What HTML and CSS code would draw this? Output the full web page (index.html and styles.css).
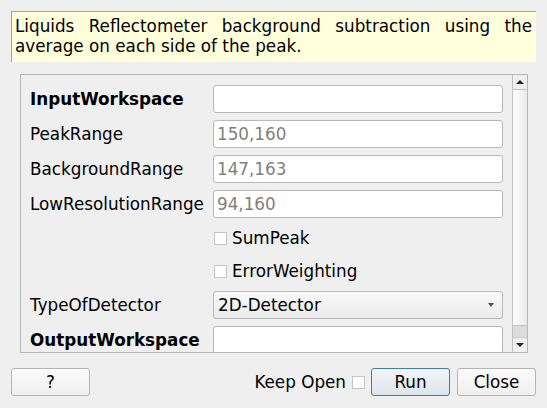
FILE: index.html
```html
<!DOCTYPE html>
<html>
<head>
<meta charset="utf-8">
<link rel="stylesheet" href="styles.css">
</head>
<body>
<div class="dialog">
  <p class="desc">Liquids Reflectometer background subtraction using the average on each side of the peak.</p>
  <div class="scroll">
    <div class="content">
      <div class="form">
        <label class="lbl bold">InputWorkspace</label>
        <div class="field"><span class="val"></span></div>

        <label class="lbl">PeakRange</label>
        <div class="field"><span class="val dim">150,160</span></div>

        <label class="lbl">BackgroundRange</label>
        <div class="field"><span class="val dim">147,163</span></div>

        <label class="lbl">LowResolutionRange</label>
        <div class="field"><span class="val dim">94,160</span></div>

        <div class="empty"></div>
        <div class="check"><span class="box"></span><span>SumPeak</span></div>

        <div class="empty"></div>
        <div class="check"><span class="box"></span><span>ErrorWeighting</span></div>

        <label class="lbl">TypeOfDetector</label>
        <div class="combo"><span>2D-Detector</span><span class="arrow"></span></div>

        <label class="lbl bold">OutputWorkspace</label>
        <div class="field"><span class="val"></span></div>
      </div>
    </div>
    <div class="sbar">
      <div class="sbtn"><span class="up"></span></div>
      <div class="handle"></div>
      <div class="track"></div>
      <div class="sbtn"><span class="down"></span></div>
    </div>
  </div>
  <div class="footer">
    <button class="btn">?</button>
    <div class="spacer"></div>
    <span class="keep">Keep Open</span>
    <span class="box keepbox"></span>
    <button class="btn run">Run</button>
    <button class="btn">Close</button>
  </div>
</div>
</body>
</html>
```

FILE: styles.css
```css
html, body {
  margin: 0;
  padding: 0;
  background: #efefef;
}
body {
  font-family: "DejaVu Sans", sans-serif;
  font-size: 16.8px;
  color: #000;
  width: 547px;
  height: 408px;
  overflow: hidden;
}
.dialog {
  box-sizing: border-box;
  height: 408px;
  padding: 11px 11px 0 11px;
  display: flex;
  flex-direction: column;
}
.desc {
  margin: 0;
  box-sizing: border-box;
  height: 51px;
  padding: 4px 4px 0 3px;
  background: #ffffdc;
  border-top: 1px solid #a0a0a0;
  border-left: 1px solid #a0a0a0;
  text-align: justify;
  line-height: 20px;
}
.scroll {
  margin: 12px 8px 0 9px;
  height: 279px;
  box-sizing: border-box;
  border: 1px solid #b6b6b6;
  display: flex;
}
.content {
  flex: 1;
  overflow: hidden;
  padding: 10px 0 0 9px;
}
.form {
  display: grid;
  grid-template-columns: 183px 290px;
  grid-auto-rows: auto;
  row-gap: 7px;
  align-items: center;
}
.lbl.bold { font-weight: bold; }
.field {
  box-sizing: border-box;
  height: 28px;
  background: #fff;
  border: 1px solid #b8b8b8;
  border-radius: 3px;
  display: flex;
  align-items: center;
  padding-left: 3px;
}
.dim { color: #7f7f7f; }
.check {
  height: 26px;
  display: flex;
  align-items: center;
  gap: 5px;
}
.box {
  display: inline-block;
  width: 13px;
  height: 13px;
  box-sizing: border-box;
  background: #fff;
  border: 1px solid #c4c4c4;
}
.check .box { margin-left: 1px; }
.combo {
  box-sizing: border-box;
  height: 28px;
  border: 1px solid #b8b8b8;
  border-radius: 3px;
  background: linear-gradient(#f9f9f9, #ececec);
  display: flex;
  align-items: center;
  justify-content: space-between;
  padding: 0 8px 0 4px;
}
.arrow {
  width: 0;
  height: 0;
  border-left: 3.5px solid transparent;
  border-right: 3.5px solid transparent;
  border-top: 4px solid #505050;
}
.sbar {
  width: 15px;
  box-sizing: border-box;
  border-left: 1px solid #c2c2c2;
  display: flex;
  flex-direction: column;
}
.sbtn {
  height: 14px;
  display: flex;
  align-items: center;
  justify-content: center;
  background: #efefef;
}
.up, .down {
  width: 0;
  height: 0;
  border-left: 4px solid transparent;
  border-right: 4px solid transparent;
}
.up { border-bottom: 4px solid #222; }
.down { border-top: 4px solid #222; }
.handle {
  flex: 1;
  border-top: 1px solid #c2c2c2;
  border-bottom: 1px solid #c2c2c2;
  background: linear-gradient(to right, #ffffff, #e9e9e9);
}
.track {
  height: 11px;
  background: #dcdcdc;
  border-bottom: 1px solid #c8c8c8;
}
.footer {
  margin-top: 15px;
  display: flex;
  align-items: center;
}
.spacer { flex: 1; }
.btn {
  width: 79px;
  height: 28px;
  box-sizing: border-box;
  font-family: "DejaVu Sans", sans-serif;
  font-size: 16.8px;
  color: #000;
  border: 1px solid #b4b4b4;
  border-radius: 3px;
  background: linear-gradient(#fbfbfb, #efefef);
  padding: 0;
}
.keep { margin-right: 6px; }
.keepbox { margin-right: 6px; }
.run {
  border-color: #3f7cb6;
  background: linear-gradient(#f3f6f9, #dde4ea);
  margin-right: 7px;
}
```
